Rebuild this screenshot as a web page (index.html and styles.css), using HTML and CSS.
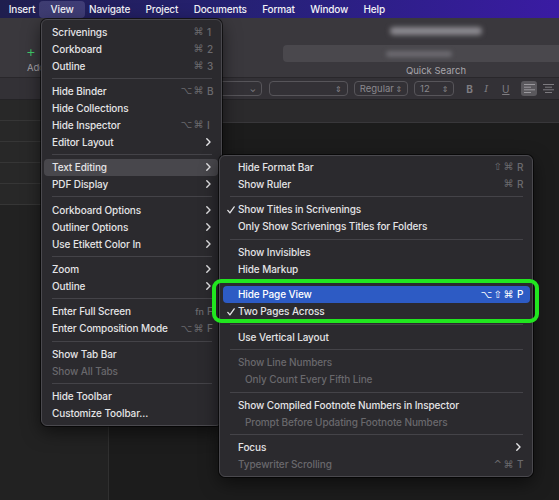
FILE: index.html
```html
<!DOCTYPE html>
<html lang="en">
<head>
  <meta charset="UTF-8" />
  <title>View Menu</title>
  <link rel="stylesheet" href="styles.css">
</head>
<body>
<div class="menubar">
  <span class="menubar-item">Insert</span>
  <span class="menubar-item active">View</span>
  <span class="menubar-item">Navigate</span>
  <span class="menubar-item">Project</span>
  <span class="menubar-item">Documents</span>
  <span class="menubar-item">Format</span>
  <span class="menubar-item">Window</span>
  <span class="menubar-item">Help</span>
</div>

<div class="window">
  <div class="toolbar">
    <div class="add-button">
      <span class="plus">+</span>
      <span class="toolbar-label">Add</span>
    </div>
    <div class="toolbar-center">
      <div class="blur-title"></div>
      <div class="search-field"><div class="blur-text"></div></div>
      <span class="toolbar-label">Quick Search</span>
    </div>
  </div>

  <div class="format-bar">
    <div class="select select-font"><span></span><span class="arrow">&#8964;</span></div>
    <div class="select select-family"><span></span><span class="arrow">&#8661;</span></div>
    <div class="select select-style"><span>Regular</span><span class="arrow">&#8661;</span></div>
    <div class="select select-size"><span>12</span><span class="arrow">&#8661;</span></div>
    <span class="fmt fmt-b">B</span>
    <span class="fmt fmt-i">I</span>
    <span class="fmt fmt-u">U</span>
    <div class="align-btn active">
      <svg width="11" height="9" viewBox="0 0 11 9"><path d="M0 0.5h11M0 3.2h7M0 5.8h11M0 8.5h7" stroke="#9b999e" stroke-width="1"/></svg>
    </div>
    <div class="align-btn">
      <svg width="11" height="9" viewBox="0 0 11 9"><path d="M0 0.5h11M2 3.2h7M0 5.8h11M2 8.5h7" stroke="#7d7b80" stroke-width="1"/></svg>
    </div>
  </div>

  <div class="content">
    <div class="binder">
      <div class="binder-row"></div>
      <div class="binder-row"></div>
      <div class="binder-row"></div>
      <div class="binder-row"></div>
      <div class="binder-row"></div>
    </div>
    <div class="editor">
      <div class="editor-header"></div>
    </div>
  </div>
</div>

<!-- View menu -->
<div class="menu view-menu">
  <div class="item"><span class="label">Scrivenings</span><span class="keys"><span class="mods">&#8984;</span><span class="key">1</span></span></div>
  <div class="item"><span class="label">Corkboard</span><span class="keys"><span class="mods">&#8984;</span><span class="key">2</span></span></div>
  <div class="item"><span class="label">Outline</span><span class="keys"><span class="mods">&#8984;</span><span class="key">3</span></span></div>
  <div class="sep"></div>
  <div class="item"><span class="label">Hide Binder</span><span class="keys"><span class="mods">&#8997;&#8984;</span><span class="key">B</span></span></div>
  <div class="item"><span class="label">Hide Collections</span></div>
  <div class="item"><span class="label">Hide Inspector</span><span class="keys"><span class="mods">&#8997;&#8984;</span><span class="key">I</span></span></div>
  <div class="item"><span class="label">Editor Layout</span><svg class="chevron" width="5" height="8" viewBox="0 0 5 8"><path d="M0.8 0.8L4 4L0.8 7.2" fill="none" stroke="#e4e4e6" stroke-width="1.4" stroke-linecap="round" stroke-linejoin="round"/></svg></div>
  <div class="sep"></div>
  <div class="item open"><span class="label">Text Editing</span><svg class="chevron" width="5" height="8" viewBox="0 0 5 8"><path d="M0.8 0.8L4 4L0.8 7.2" fill="none" stroke="#e4e4e6" stroke-width="1.4" stroke-linecap="round" stroke-linejoin="round"/></svg></div>
  <div class="item"><span class="label">PDF Display</span><svg class="chevron" width="5" height="8" viewBox="0 0 5 8"><path d="M0.8 0.8L4 4L0.8 7.2" fill="none" stroke="#e4e4e6" stroke-width="1.4" stroke-linecap="round" stroke-linejoin="round"/></svg></div>
  <div class="sep"></div>
  <div class="item"><span class="label">Corkboard Options</span><svg class="chevron" width="5" height="8" viewBox="0 0 5 8"><path d="M0.8 0.8L4 4L0.8 7.2" fill="none" stroke="#e4e4e6" stroke-width="1.4" stroke-linecap="round" stroke-linejoin="round"/></svg></div>
  <div class="item"><span class="label">Outliner Options</span><svg class="chevron" width="5" height="8" viewBox="0 0 5 8"><path d="M0.8 0.8L4 4L0.8 7.2" fill="none" stroke="#e4e4e6" stroke-width="1.4" stroke-linecap="round" stroke-linejoin="round"/></svg></div>
  <div class="item"><span class="label">Use Etikett Color In</span><svg class="chevron" width="5" height="8" viewBox="0 0 5 8"><path d="M0.8 0.8L4 4L0.8 7.2" fill="none" stroke="#e4e4e6" stroke-width="1.4" stroke-linecap="round" stroke-linejoin="round"/></svg></div>
  <div class="sep"></div>
  <div class="item"><span class="label">Zoom</span><svg class="chevron" width="5" height="8" viewBox="0 0 5 8"><path d="M0.8 0.8L4 4L0.8 7.2" fill="none" stroke="#e4e4e6" stroke-width="1.4" stroke-linecap="round" stroke-linejoin="round"/></svg></div>
  <div class="item"><span class="label">Outline</span><svg class="chevron" width="5" height="8" viewBox="0 0 5 8"><path d="M0.8 0.8L4 4L0.8 7.2" fill="none" stroke="#e4e4e6" stroke-width="1.4" stroke-linecap="round" stroke-linejoin="round"/></svg></div>
  <div class="sep"></div>
  <div class="item"><span class="label">Enter Full Screen</span><span class="keys"><span class="mods fn">fn</span><span class="key">F</span></span></div>
  <div class="item"><span class="label">Enter Composition Mode</span><span class="keys"><span class="mods">&#8997;&#8984;</span><span class="key">F</span></span></div>
  <div class="sep"></div>
  <div class="item"><span class="label">Show Tab Bar</span></div>
  <div class="item disabled"><span class="label">Show All Tabs</span></div>
  <div class="sep"></div>
  <div class="item"><span class="label">Hide Toolbar</span></div>
  <div class="item"><span class="label">Customize Toolbar...</span></div>
</div>

<!-- Text Editing submenu -->
<div class="menu submenu">
  <div class="item"><span class="label">Hide Format Bar</span><span class="keys"><span class="mods">&#8679;&#8984;</span><span class="key">R</span></span></div>
  <div class="item"><span class="label">Show Ruler</span><span class="keys"><span class="mods">&#8984;</span><span class="key">R</span></span></div>
  <div class="sep"></div>
  <div class="item checked"><svg class="check" width="8" height="8" viewBox="0 0 8 8"><path d="M0.8 4.4L2.9 6.9L7.2 0.9" fill="none" stroke="#e4e4e6" stroke-width="1.3" stroke-linecap="round" stroke-linejoin="round"/></svg><span class="label">Show Titles in Scrivenings</span></div>
  <div class="item"><span class="label">Only Show Scrivenings Titles for Folders</span></div>
  <div class="sep"></div>
  <div class="item"><span class="label">Show Invisibles</span></div>
  <div class="item"><span class="label">Hide Markup</span></div>
  <div class="sep"></div>
  <div class="marked">
    <div class="item selected"><span class="label">Hide Page View</span><span class="keys"><span class="mods">&#8997;&#8679;&#8984;</span><span class="key">P</span></span></div>
    <div class="item checked"><svg class="check" width="8" height="8" viewBox="0 0 8 8"><path d="M0.8 4.4L2.9 6.9L7.2 0.9" fill="none" stroke="#e4e4e6" stroke-width="1.3" stroke-linecap="round" stroke-linejoin="round"/></svg><span class="label">Two Pages Across</span></div>
  </div>
  <div class="sep"></div>
  <div class="item"><span class="label">Use Vertical Layout</span></div>
  <div class="sep"></div>
  <div class="item disabled"><span class="label">Show Line Numbers</span></div>
  <div class="item disabled indent"><span class="label">Only Count Every Fifth Line</span></div>
  <div class="sep"></div>
  <div class="item"><span class="label">Show Compiled Footnote Numbers in Inspector</span></div>
  <div class="item disabled indent"><span class="label">Prompt Before Updating Footnote Numbers</span></div>
  <div class="sep"></div>
  <div class="item"><span class="label">Focus</span><svg class="chevron" width="5" height="8" viewBox="0 0 5 8"><path d="M0.8 0.8L4 4L0.8 7.2" fill="none" stroke="#e4e4e6" stroke-width="1.4" stroke-linecap="round" stroke-linejoin="round"/></svg></div>
  <div class="item disabled"><span class="label">Typewriter Scrolling</span><span class="keys"><span class="mods">^&#8984;</span><span class="key">T</span></span></div>
</div>
</body>
</html>
```

FILE: styles.css
```css
body {
  margin: 0;
  width: 559px;
  height: 500px;
  overflow: hidden;
  position: relative;
  background: #1c1c1c;
  font-family: Inter, "DejaVu Sans", sans-serif;
  display: flex;
  flex-direction: column;
}

/* top menu bar */
.menubar {
  height: 18px;
  flex-shrink: 0;
  display: flex;
  align-items: center;
  padding-left: 1px;
  background: linear-gradient(90deg, #1f1e4e 0%, #27217a 50%, #3a1ba3 100%);
  color: #f2f2f7;
  font-size: 10px;
  font-weight: 500;
  letter-spacing: -0.15px;
}

.menubar-item {
  height: 17px;
  line-height: 17px;
  padding: 0 7.7px;
  border-radius: 4px;
}

.menubar-item.active {
  margin: 0 -4px;
  padding: 0 11.7px;
  background: rgba(120, 118, 170, 0.35);
}

/* app window behind the menu */
.window {
  flex: 1;
  display: flex;
  flex-direction: column;
  min-height: 0;
}

.toolbar {
  height: 60px;
  flex-shrink: 0;
  display: grid;
  grid-template-columns: 283px 306px;
  background: #3a383d;
  border-bottom: 1px solid #29272b;
  box-sizing: border-box;
}

.add-button {
  display: flex;
  flex-direction: column;
  align-items: flex-start;
  padding: 28px 0 0 26px;
}

.plus {
  color: #3fcf6b;
  font-size: 15px;
  line-height: 12px;
  font-weight: 300;
}

.toolbar-label {
  color: #a8a6ac;
  font-size: 9.5px;
  line-height: 12px;
}

.add-button .toolbar-label {
  margin-top: 4px;
  margin-left: 1px;
}

.toolbar-center {
  display: flex;
  flex-direction: column;
  align-items: center;
  padding-top: 7px;
}

.blur-title {
  width: 92px;
  height: 8px;
  margin-top: 2px;
  border-radius: 4px;
  background: #8c8a90;
  filter: blur(2.5px);
}

.search-field {
  align-self: stretch;
  height: 17px;
  margin-top: 10px;
  border-radius: 4px;
  background: #4a484d;
  filter: blur(0.6px);
  display: flex;
  align-items: center;
  justify-content: center;
}

.blur-text {
  width: 66px;
  height: 6px;
  margin-right: 34px;
  border-radius: 3px;
  background: #6c6a70;
  filter: blur(2px);
}

.toolbar-center .toolbar-label {
  margin-top: 3px;
}

.format-bar {
  height: 22px;
  flex-shrink: 0;
  display: flex;
  align-items: center;
  padding-left: 200px;
  background: #333136;
  border-bottom: 1px solid #242326;
  box-sizing: border-box;
  color: #8b898e;
  font-size: 9.5px;
}

.select {
  height: 15px;
  box-sizing: border-box;
  border: 1px solid #57555a;
  border-radius: 4px;
  display: flex;
  align-items: center;
  justify-content: space-between;
  padding: 0 5px;
  margin-right: 6px;
}

.select .arrow {
  font-size: 8px;
  color: #88868b;
}

.select-font { width: 65px; margin-right: 7px; }
.select-family { width: 83px; }
.select-style { width: 57px; }
.select-size { width: 42px; margin-right: 12px; }

.fmt {
  width: 19px;
  font-size: 10px;
  font-weight: 700;
  color: #7f7d82;
}

.fmt-i {
  font-style: italic;
  font-weight: 400;
  font-family: "DejaVu Serif", serif;
}

.fmt-u {
  text-decoration: underline;
  font-weight: 400;
}

.align-btn {
  width: 17px;
  height: 15px;
  border-radius: 3px;
  display: flex;
  align-items: center;
  justify-content: center;
  margin-right: 3px;
}

.align-btn.active {
  margin-left: 1px;
  background: #5a585d;
}

.content {
  flex: 1;
  display: flex;
  min-height: 0;
}

.binder {
  width: 108px;
  flex-shrink: 0;
  background: #222222;
  border-right: 1px solid #303030;
}

.binder-row {
  height: 20px;
  background: #282828;
  border-bottom: 1px solid #363636;
}

.editor {
  flex: 1;
}

.editor-header {
  height: 22px;
  background: #2b2a2c;
  border-bottom: 1px solid #38373a;
}

/* menus */
.menu {
  position: absolute;
  box-sizing: border-box;
  background: #2b2a2e;
  border: 1px solid #4a494e;
  border-radius: 6px;
  box-shadow: 0 0 0 1px rgba(0, 0, 0, 0.6), 0 6px 18px rgba(0, 0, 0, 0.55);
  color: #e4e4e6;
  font-size: 10px;
  font-weight: 500;
  letter-spacing: -0.1px;
}

.view-menu {
  left: 41px;
  top: 19px;
  width: 181px;
  padding: 3px 0 3px;
}

.submenu {
  left: 219px;
  top: 155px;
  width: 314px;
  padding: 2px 0 3px;
}

.item {
  position: relative;
  height: 17px;
  display: flex;
  align-items: center;
  border-radius: 4px;
  white-space: nowrap;
}

.view-menu .item {
  margin: 0 3px 0 2px;
  padding: 0 5px 0 8px;
}

.submenu .item {
  margin: 0 2px 0 3px;
  padding: 0 7px 0 15px;
}

.item .label {
  flex: 1;
}

.item.open {
  background: #48474c;
}

.item.selected {
  background: #2d5bc4;
  color: #ffffff;
}

.item.disabled {
  color: #69686c;
}

.item.indent .label {
  padding-left: 7px;
}

.keys {
  display: flex;
  align-items: center;
  color: #6b6a6e;
}

.item.selected .keys {
  color: #ffffff;
}

.mods {
  font-family: "DejaVu Sans", sans-serif;
  font-size: 10px;
  letter-spacing: 1.5px;
}

.mods.fn {
  font-family: Inter, sans-serif;
  font-size: 9px;
  letter-spacing: 0;
  margin-right: 1px;
}

.key {
  width: 6px;
  margin-left: 2px;
}

.chevron {
  margin-right: 2px;
}

.check {
  position: absolute;
  left: 4px;
  top: 5px;
}

.sep {
  height: 1px;
  margin: 4px 9px 3.5px 10px;
  background: #444348;
}

.view-menu .sep {
  margin: 3.7px 9px 3.7px 10px;
}

/* green marker drawn over the two page view items */
.marked {
  position: relative;
}

.marked::after {
  content: "";
  position: absolute;
  top: -7px;
  bottom: -3px;
  left: -8px;
  right: -7px;
  border: 4px solid #21e61f;
  border-radius: 9px;
  pointer-events: none;
}
```
